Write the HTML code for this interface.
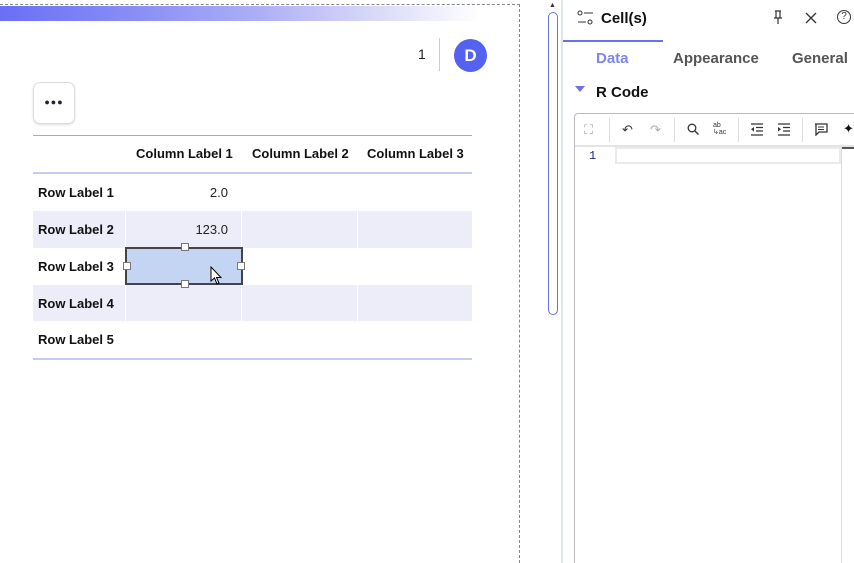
<!DOCTYPE html>
<html><head><style>
*{margin:0;padding:0;box-sizing:border-box}
html,body{width:854px;height:563px;overflow:hidden}
body{background:#fff;font-family:"Liberation Sans",sans-serif;position:relative}
.a{position:absolute}
.t{font-size:13px;font-weight:bold;color:#111}
.ic{position:absolute;color:#333;font-size:13px}
.sep{position:absolute;top:118px;width:1px;height:24px;background:#ddd}
</style></head><body>
<div class="a" style="left:0;top:6px;width:480px;height:15px;background:linear-gradient(90deg,#6a6ff5 0%,#8b90f5 30%,#aeb1f6 55%,#dcdcf8 80%,#fff 100%)"></div>
<div class="a" style="left:0;top:4px;width:520px;border-top:1px dashed #888"></div>
<div class="a" style="left:519px;top:4px;height:559px;border-left:1px dashed #888"></div>
<div class="a" style="left:418px;top:46px;font-size:14px;color:#222">1</div>
<div class="a" style="left:439px;top:38px;width:1px;height:33px;background:#ccc"></div>
<div class="a" style="left:454px;top:39px;width:33px;height:33px;border-radius:50%;background:#5561ef;color:#fff;font-weight:bold;font-size:17px;text-align:center;line-height:33px">D</div>
<div class="a" style="left:33px;top:82px;width:42px;height:42px;border:1px solid #ddd;border-radius:7px;box-shadow:0 1px 2px #ddd;text-align:center;line-height:38px;font-weight:bold;font-size:9px;letter-spacing:1px;color:#223">●●●</div>
<!-- table -->
<div class="a" style="left:33px;top:135px;width:439px;height:1px;background:#aab"></div>
<div class="a" style="left:33px;top:172px;width:439px;height:2px;background:#c5cbee"></div>
<div class="a" style="left:33px;top:211px;width:439px;height:37px;background:#ededfa"></div>
<div class="a" style="left:33px;top:285px;width:439px;height:36px;background:#ededfa"></div>
<div class="a" style="left:125px;top:211px;width:1px;height:110px;background:#fff"></div>
<div class="a" style="left:241px;top:211px;width:1px;height:110px;background:#fff"></div>
<div class="a" style="left:357px;top:211px;width:1px;height:110px;background:#fff"></div>
<div class="a" style="left:33px;top:358px;width:439px;height:2px;background:#c5cbee"></div>
<div class="a t" style="left:136px;top:146px">Column Label 1</div>
<div class="a t" style="left:252px;top:146px">Column Label 2</div>
<div class="a t" style="left:367px;top:146px">Column Label 3</div>
<div class="a t" style="left:38px;top:185px">Row Label 1</div>
<div class="a t" style="left:38px;top:222px">Row Label 2</div>
<div class="a t" style="left:38px;top:259px">Row Label 3</div>
<div class="a t" style="left:38px;top:296px">Row Label 4</div>
<div class="a t" style="left:38px;top:332px">Row Label 5</div>
<div class="a" style="left:160px;top:185px;width:68px;text-align:right;font-size:13px;color:#222">2.0</div>
<div class="a" style="left:160px;top:222px;width:68px;text-align:right;font-size:13px;color:#222">123.0</div>
<div class="a" style="left:125px;top:247px;width:118px;height:38px;background:#c3d5f3;border:2px solid #444"></div>
<div class="a" style="left:181px;top:243px;width:8px;height:8px;background:#fff;border:1px solid #777"></div>
<div class="a" style="left:181px;top:280px;width:8px;height:8px;background:#fff;border:1px solid #777"></div>
<div class="a" style="left:123px;top:262px;width:8px;height:8px;background:#fff;border:1px solid #777"></div>
<div class="a" style="left:237px;top:262px;width:8px;height:8px;background:#fff;border:1px solid #777"></div>
<svg class="a" style="left:210px;top:266px" width="14" height="20"><path d="M1 1 L1 15 L4.5 12 L7 18 L9 17 L6.5 11.5 L11 11.5 Z" fill="#fff" stroke="#000" stroke-width="1"/></svg>
<!-- scrollbar -->
<div class="a" style="left:549px;top:2px;font-size:7px;color:#333">▲</div>
<div class="a" style="left:548px;top:12px;width:10px;height:303px;border:1px solid #6a72e6;border-radius:5px"></div>
<!-- panel -->
<div class="a" style="left:561px;top:0;width:2px;height:563px;background:#dfe4ee"></div>
<svg class="a" style="left:577px;top:10px" width="18" height="16"><circle cx="3" cy="3" r="2" fill="none" stroke="#333"/><path d="M7 3h9M1 12h8" stroke="#333"/><circle cx="13" cy="12" r="2" fill="none" stroke="#333"/></svg>
<div class="a" style="left:601px;top:10px;font-size:15px;font-weight:bold;color:#111">Cell(s)</div>
<svg class="a" style="left:772px;top:10px" width="12" height="15"><path d="M3 1h6M4 1v7M8 1v7M2 8h8M6 8v6" stroke="#333" stroke-width="1.2" fill="none"/></svg>
<svg class="a" style="left:805px;top:12px" width="12" height="12"><path d="M1 1L11 11M11 1L1 11" stroke="#333" stroke-width="1.3"/></svg>
<div class="a" style="left:837px;top:10px;width:14px;height:14px;border:1.3px solid #333;border-radius:50%;font-size:10px;text-align:center;line-height:12px;color:#333">?</div>
<div class="a" style="left:563px;top:40px;width:100px;height:2px;background:#6a72e6"></div>
<div class="a" style="left:596px;top:50px;font-size:15px;font-weight:bold;color:#7d85ee">Data</div>
<div class="a" style="left:673px;top:50px;font-size:15px;font-weight:bold;color:#555">Appearance</div>
<div class="a" style="left:792px;top:50px;font-size:15px;font-weight:bold;color:#555">General</div>
<div class="a" style="left:575px;top:86px;width:0;height:0;border-left:5px solid transparent;border-right:5px solid transparent;border-top:6px solid #6a72e6"></div>
<div class="a" style="left:596px;top:84px;font-size:15px;font-weight:bold;color:#111">R Code</div>
<div class="a" style="left:574px;top:113px;width:290px;height:460px;border:1px solid #bbb;border-radius:4px"></div>
<div class="a" style="left:575px;top:145px;width:280px;height:2px;background:#e4e4e4"></div>
<div class="ic" style="left:584px;top:122px;color:#aaa">⛶</div>
<div class="sep" style="left:609px"></div>
<div class="ic" style="left:622px;top:122px">↶</div>
<div class="ic" style="left:650px;top:122px;color:#aaa">↷</div>
<div class="sep" style="left:674px"></div>
<svg class="a" style="left:687px;top:123px" width="12" height="12"><circle cx="5" cy="5" r="3.8" fill="none" stroke="#333" stroke-width="1.3"/><path d="M8 8l3.5 3.5" stroke="#333" stroke-width="1.3"/></svg>
<div class="a" style="left:713px;top:122px;font-size:7px;line-height:7px;color:#333">ab<br>↳ac</div>
<div class="sep" style="left:738px"></div>
<svg class="a" style="left:750px;top:123px" width="14" height="13"><path d="M1 1h12M6 4.5h7M6 8h7M1 12h12" stroke="#333" stroke-width="1.3"/><path d="M4 4L1 6.3L4 8.5Z" fill="#333"/></svg>
<svg class="a" style="left:777px;top:123px" width="14" height="13"><path d="M1 1h12M6 4.5h7M6 8h7M1 12h12" stroke="#333" stroke-width="1.3"/><path d="M1 4L4 6.3L1 8.5Z" fill="#333"/></svg>
<div class="sep" style="left:802px"></div>
<svg class="a" style="left:814px;top:123px" width="14" height="13"><path d="M1 1h12v8H5l-3 3V1z" fill="none" stroke="#333" stroke-width="1.3"/><path d="M4 4h6M4 6.5h6" stroke="#333"/></svg>
<div class="ic" style="left:843px;top:121px;color:#111">✦</div>
<div class="a" style="left:589px;top:149px;font-family:'Liberation Mono',monospace;font-size:12px;color:#1a2a7a">1</div>
<div class="a" style="left:615px;top:147px;width:226px;height:17px;border:2px solid #eaeaea"></div>
<div class="a" style="left:841px;top:147px;width:1px;height:416px;background:#ddd"></div>
<div class="a" style="left:842px;top:147px;width:12px;height:2px;background:#555"></div>
</body></html>
